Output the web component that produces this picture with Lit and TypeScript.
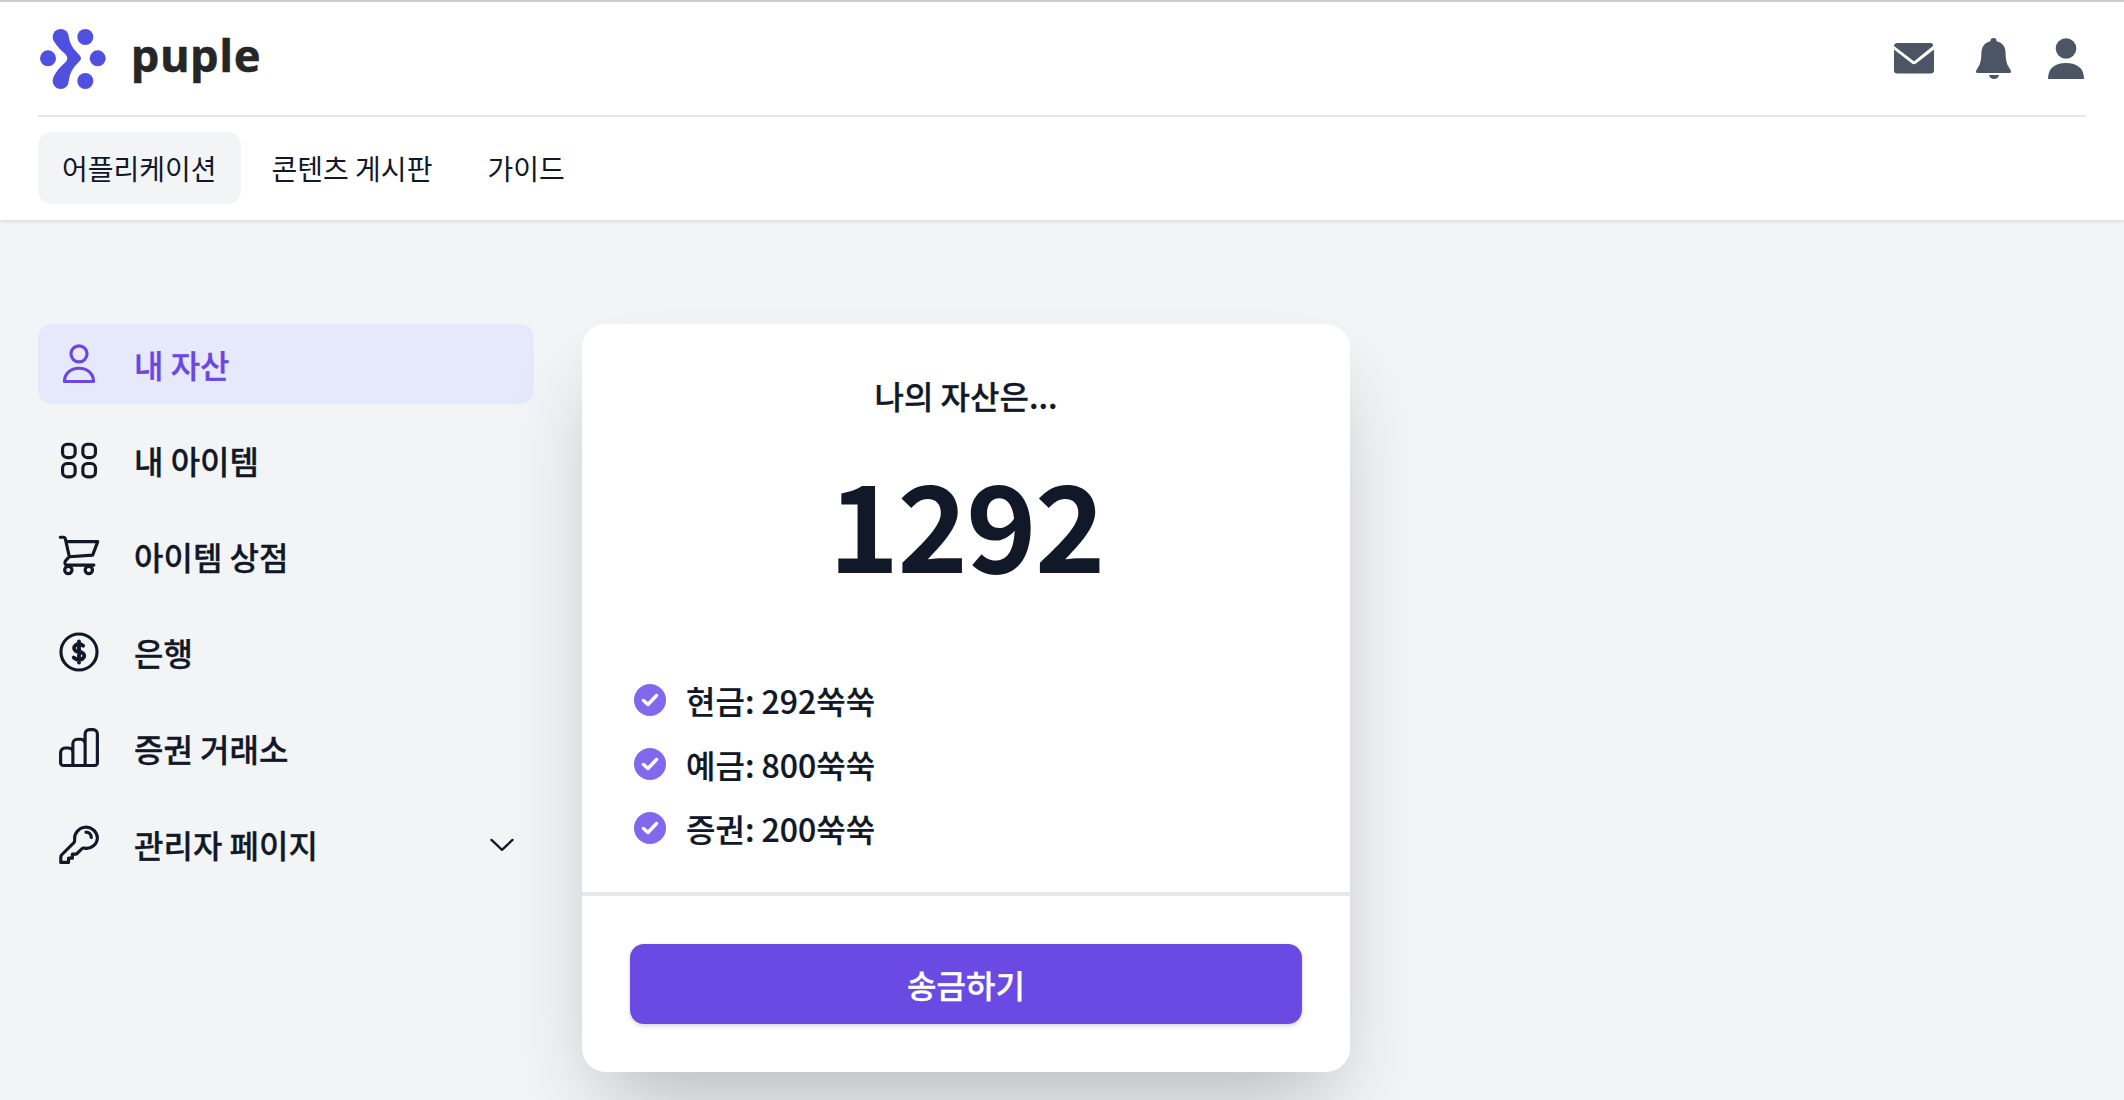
import { css, html, LitElement, svg } from 'lit';
import { customElement } from 'lit/decorators.js';

const sideIcons = {
  user: svg`<circle cx="12" cy="6.200" r="4.600" /><path d="M3.700 22c0-4.600 3.600-7.600 8.300-7.600s8.300 3 8.300 7.600z" />`,
  grid: svg`<rect x="2.600" y="3" width="7.200" height="7.600" rx="2.600" /><rect x="14.200" y="3" width="7.200" height="7.600" rx="2.600" /><rect x="2.600" y="14" width="7.200" height="7.600" rx="2.600" /><rect x="14.200" y="14" width="7.200" height="7.600" rx="2.600" />`,
  cart: svg`<path d="M1.300 1.300h1.800c.6 0 1 .4 1.100.9l2.300 10.300M5.200 3.800h17.500l-2.900 7.700-13.300.9-2 2.100c-1 1-.8 2.700 1 2.700h15" /><circle cx="5.900" cy="20" r="2.100" /><circle cx="17.600" cy="20" r="2.100" />`,
  dollar: svg`<circle cx="12" cy="12" r="10.300" /><path stroke-width="2.200" d="M12 6v12m-3-2.800.9.6c1.200.9 3 .9 4.200 0 1.200-.9 1.200-2.300 0-3.200-.6-.4-1.300-.6-2.100-.6-.7 0-1.400-.2-2-.7-1.100-.9-1.100-2.300 0-3.200s2.900-.9 4 0l.4.3" />`,
  bars: svg`<path d="M8.500 22H3a1.500 1.500 0 0 1-1.500-1.500v-6A2.500 2.500 0 0 1 4 12h2a2.500 2.500 0 0 1 2.500 2.500zM8.500 22V9.500A2.500 2.500 0 0 1 11 7h2a2.500 2.500 0 0 1 2.500 2.500V22zM15.500 22V4A2.500 2.500 0 0 1 18 1.500h2A2.500 2.500 0 0 1 22.500 4v16.500A1.500 1.500 0 0 1 21 22z" />`,
  key: svg`<path d="M16 5.250a3 3 0 0 1 3 3m3.500 0a6.200 6.200 0 0 1-7.300 6.100c-.600-.100-1.200 0-1.600.400L10.500 17.800H8.200v2.300H6v2.400H1.600v-2.900c0-.600.200-1.200.700-1.600l6.800-6.800c.400-.400.500-1 .400-1.600A6.200 6.200 0 1 1 22.500 8.250z" />`,
};

const menu = [
  { icon: sideIcons.user, label: '내 자산', active: true },
  { icon: sideIcons.grid, label: '내 아이템' },
  { icon: sideIcons.cart, label: '아이템 상점' },
  { icon: sideIcons.dollar, label: '은행' },
  { icon: sideIcons.bars, label: '증권 거래소' },
  { icon: sideIcons.key, label: '관리자 페이지', more: true },
];

const balances = ['현금: 292쑥쑥', '예금: 800쑥쑥', '증권: 200쑥쑥'];

@customElement('app-root')
export class AppRoot extends LitElement {
  static override styles = css`
    :host {
      display: block;
      min-height: 100vh;
      background: #f3f4f6;
      color: #111827;
      font-family: 'Noto Sans CJK KR', 'Noto Sans', sans-serif;
      overflow: hidden;
    }
    header {
      background: #fff;
      border-top: 2px solid #cccccc;
      padding: 0 38px 16px;
      box-shadow: 0 1px 4px rgba(0, 0, 0, 0.14);
      position: relative;
    }
    .top {
      height: 113px;
      display: flex;
      align-items: center;
      justify-content: space-between;
      border-bottom: 2px solid #e5e7eb;
    }
    .brand {
      display: flex;
      align-items: center;
      gap: 25px;
      margin-left: 2px;
    }
    .brand svg {
      display: block;
    }
    .word {
      font-family: 'Noto Sans', sans-serif;
      font-weight: 700;
      font-size: 45px;
      line-height: 60px;
      color: #262626;
      letter-spacing: 0.8px;
      margin-bottom: 8px;
      -webkit-text-stroke: 0.5px #262626;
    }
    .actions {
      display: flex;
      align-items: center;
      margin-right: 2px;
    }
    .actions svg {
      display: block;
      fill: #4b5563;
    }
    .mail {
      margin-right: 42px;
    }
    .bell {
      margin-right: 36px;
    }
    nav {
      display: flex;
      gap: 7px;
      padding-top: 15px;
    }
    nav a {
      height: 72px;
      display: flex;
      align-items: center;
      padding: 0 24px;
      border-radius: 14px;
      font-size: 28px;
    }
    nav a.on {
      background: #f3f4f6;
    }
    .main {
      display: flex;
      align-items: flex-start;
      gap: 48px;
      padding: 104px 38px 0;
    }
    .side {
      width: 496px;
      display: flex;
      flex-direction: column;
      gap: 16px;
    }
    .item {
      height: 80px;
      display: flex;
      align-items: center;
      gap: 34px;
      padding: 0 20px;
      border-radius: 14px;
      font-size: 32px;
      font-weight: 500;
      -webkit-text-stroke: 0.3px currentColor;
    }
    .item.on {
      background: #e6e8fc;
      color: #6b46e5;
    }
    .item svg {
      display: block;
      flex: none;
      fill: none;
      stroke: currentColor;
      stroke-width: 1.8;
      stroke-linecap: round;
      stroke-linejoin: round;
    }
    .item .chev {
      margin-left: auto;
      margin-right: -2px;
      stroke-width: 2;
    }
    .card {
      width: 768px;
      height: 748px;
      box-sizing: border-box;
      background: #fff;
      border-radius: 24px;
      box-shadow: 0 44px 88px -21px rgba(0, 0, 0, 0.25);
      padding-top: 48px;
    }
    .title {
      text-align: center;
      font-size: 32px;
      line-height: 47px;
      font-weight: 500;
      -webkit-text-stroke: 0.3px currentColor;
    }
    .total {
      text-align: center;
      font-size: 120px;
      line-height: 126px;
      font-weight: 700;
      letter-spacing: -2px;
      margin-top: 39px;
    }
    ul {
      list-style: none;
      margin: 93px 0 0;
      padding: 0 52px;
      display: flex;
      flex-direction: column;
      gap: 17px;
    }
    li {
      display: flex;
      align-items: center;
      gap: 20px;
      font-size: 32px;
      line-height: 47px;
      font-weight: 500;
      -webkit-text-stroke: 0.2px currentColor;
    }
    li svg {
      display: block;
      flex: none;
      margin-top: -2px;
    }
    .foot {
      margin-top: 40px;
      border-top: 4px solid #e5e7eb;
      padding: 48px;
    }
    button {
      display: block;
      width: 100%;
      height: 80px;
      border: none;
      border-radius: 14px;
      background: #6a4ae3;
      color: #fff;
      font: inherit;
      font-size: 32px;
      font-weight: 500;
      -webkit-text-stroke: 0.3px currentColor;
      box-shadow: 0 2px 5px rgba(0, 0, 0, 0.16);
    }
  `;

  override render() {
    return html`
      <header>
        <div class="top">
          <div class="brand">
            <svg width="66" height="62" viewBox="0 0 66 62" fill="#5050e0">
              <circle cx="8" cy="30.300" r="8" />
              <circle cx="45.300" cy="9" r="8" />
              <circle cx="45.300" cy="53" r="8" />
              <circle cx="57.700" cy="30.300" r="8" />
              <circle cx="20.700" cy="9" r="8" />
              <circle cx="20.700" cy="53" r="8" />
              <path
                d="M12.700 9H28.700C29.500 13 31 17 33.500 20.500C36 24 41 27.500 41 30.300C41 33 36 36.500 33.500 40C31 43.500 29.500 47.500 28.700 53H12.700C13.700 47 18 41 23 36.500C25.500 34.500 27.300 32.500 27.300 30.300C27.300 28 25.500 26 23 24C18 19.500 13.700 14 12.700 9Z"
              />
            </svg>
            <span class="word">puple</span>
          </div>
          <div class="actions">
            <svg class="mail" width="40" height="42" viewBox="1 0 40 42">
              <path
                d="M4.500 5h33c1.800 0 2.500 1 2.500 2.500v.5L21.500 23c-.300.300-.700.300-1 0L1 8v-.5C1 6 2.700 5 4.500 5z"
              />
              <path
                d="M1 11.500 19 25.500c1.200 1 2.800 1 4 0L41 11.500v21c0 2-1.300 3-3 3H4c-1.700 0-3-1-3-3z"
              />
            </svg>
            <svg class="bell" width="36" height="42" viewBox="3 0 36 42">
              <path
                d="M21 0c1.500 0 2.600 1.200 2.600 3.200 6 1.300 9 6 9 11.800 0 5.500.7 11 3.700 15 .8 1.300 1.700 2.500 1.700 3.500 0 1-.8 1.500-2 1.500H5c-1.200 0-2-.5-2-1.500 0-1 .9-2.200 1.700-3.500 3-4 3.700-9.500 3.700-15 0-5.800 3-10.500 9-11.800C17.400 1.200 18.500 0 21 0z"
              />
              <path d="M16 37h10c-.5 2.500-2.500 4-5 4s-4.500-1.500-5-4z" />
            </svg>
            <svg width="36" height="42" viewBox="0 0 36 42">
              <circle cx="18" cy="10.500" r="10.300" />
              <path d="M0 41c0-11 7-16 18-16s18 5 18 16z" />
            </svg>
          </div>
        </div>
        <nav>
          <a class="on">어플리케이션</a>
          <a>콘텐츠 게시판</a>
          <a>가이드</a>
        </nav>
      </header>
      <div class="main">
        <div class="side">
          ${menu.map(
            (m) => html`
              <div class="item ${m.active ? 'on' : ''}">
                <svg width="42" height="42" viewBox="0 0 24 24">${m.icon}</svg>
                <span>${m.label}</span>
                ${m.more
                  ? html`<svg class="chev" width="28" height="28" viewBox="0 0 24 24">
                      <path d="M3 8.500 12 17l9-8.500" />
                    </svg>`
                  : ''}
              </div>
            `,
          )}
        </div>
        <div class="card">
          <div class="title">나의 자산은...</div>
          <div class="total">1292</div>
          <ul>
            ${balances.map(
              (b) => html`
                <li>
                  <svg width="32" height="32" viewBox="0 0 32 32">
                    <circle cx="16" cy="16" r="16" fill="#8069ec" />
                    <path
                      d="M9.500 16.500 14 20.500l8.500-9"
                      fill="none"
                      stroke="#fff"
                      stroke-width="3.500"
                      stroke-linecap="round"
                      stroke-linejoin="round"
                    />
                  </svg>
                  <span>${b}</span>
                </li>
              `,
            )}
          </ul>
          <div class="foot"><button>송금하기</button></div>
        </div>
      </div>
    `;
  }
}
